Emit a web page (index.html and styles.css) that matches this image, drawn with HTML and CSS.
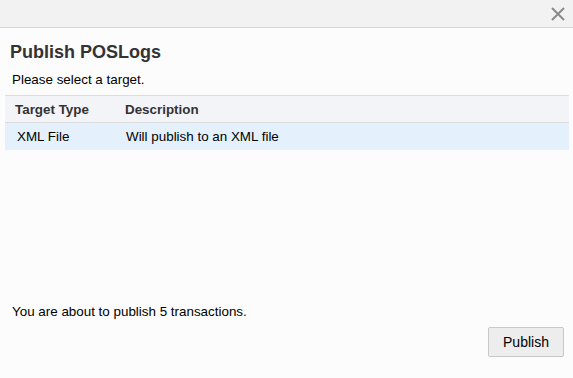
FILE: index.html
```html
<!DOCTYPE html>
<html lang="en">
<head>
    <meta charset="UTF-8">
    <title>Publish POSLogs</title>
    <link rel="stylesheet" href="styles.css">
</head>
<body>

    <div class="dialog">
        <div class="dialog-header">
            <button class="close-btn" title="Close">
                <svg width="14" height="14" viewBox="0 0 14 14">
                    <path d="M1 1 L13 13 M13 1 L1 13" stroke="#8a8a8a" stroke-width="2" fill="none"/>
                </svg>
            </button>
        </div>

        <div class="dialog-body">
            <h2>Publish POSLogs</h2>
            <p class="hint">Please select a target.</p>

            <table class="targets">
                <thead>
                    <tr>
                        <th class="col-type">Target Type</th>
                        <th>Description</th>
                    </tr>
                </thead>
                <tbody>
                    <tr class="selected">
                        <td>XML File</td>
                        <td>Will publish to an XML file</td>
                    </tr>
                </tbody>
            </table>

            <div class="spacer"></div>

            <p class="summary">You are about to publish 5 transactions.</p>

            <div class="btn-row">
                <button class="btn">Publish</button>
            </div>
        </div>
    </div>

</body>
</html>
```

FILE: styles.css
```css
body {
    font-family: Arial, "Liberation Sans", sans-serif;
    margin: 0;
    padding: 0;
    background-color: #fcfcfc;
    color: #000;
}

.dialog {
    height: 378px;
    display: flex;
    flex-direction: column;
}

.dialog-header {
    height: 27px;
    background: #f2f2f2;
    border-bottom: 1px solid #d5d5d5;
    display: flex;
    justify-content: flex-end;
    align-items: center;
}

.close-btn {
    background: none;
    border: none;
    padding: 0;
    margin-right: 8px;
    margin-top: 1px;
    width: 14px;
    height: 14px;
    cursor: pointer;
}

.dialog-body {
    flex: 1;
    display: flex;
    flex-direction: column;
    padding: 0 4px 0 5px;
}

h2 {
    font-size: 18px;
    font-weight: bold;
    color: #333;
    margin: 13px 0 0 5px;
    line-height: 22px;
}

.hint {
    font-size: 13.4px;
    margin: 9px 0 0 7px;
    line-height: 15px;
}

.targets {
    width: 100%;
    border-collapse: collapse;
    margin-top: 8px;
    font-size: 13.4px;
}

.targets th {
    text-align: left;
    font-weight: bold;
    color: #333;
    background: #f3f4f8;
    border-top: 1px solid #dcdcdc;
    border-bottom: 1px solid #dcdcdc;
    height: 26px;
    padding: 0 0 0 10px;
}

.targets th.col-type {
    width: 100px;
}

.targets td {
    height: 27px;
    padding: 0 0 0 12px;
    background: #e4f0fb;
}

.targets td + td {
    padding-left: 11px;
}

.spacer {
    flex: 1;
}

.summary {
    font-size: 13.4px;
    margin: 0 0 0 7px;
    line-height: 15px;
}

.btn-row {
    display: flex;
    justify-content: flex-end;
    margin-top: 8px;
    margin-bottom: 21px;
}

.btn {
    font-family: Arial, "Liberation Sans", sans-serif;
    font-size: 14px;
    background: #ededed;
    border: 1px solid #c9c9c9;
    border-radius: 2px;
    width: 76px;
    height: 30px;
    margin-right: 5px;
    color: #000;
    cursor: pointer;
}
```
